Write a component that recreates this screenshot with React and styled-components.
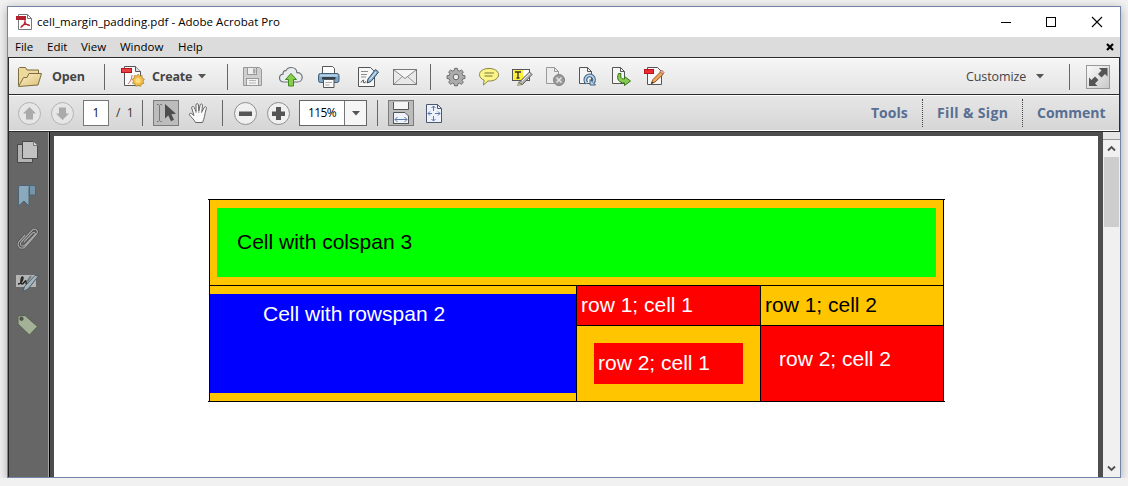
import React from 'react';
import styled, { createGlobalStyle } from 'styled-components'

const Open = () => (
    <Icon width="26" height="24">
        <defs>
            <linearGradient id="folder" x1="0" y1="0" x2="1" y2="1">
                <stop offset="0" stopColor="#fbf0c4" />
                <stop offset="1" stopColor="#dcbf78" />
            </linearGradient>
        </defs>
        <path d="M1.500 20.500V3.500L2.500 2.500h6l1.500 2.500H21.500V9" fill="#ecd99c" stroke="#7d6c3e" />
        <path d="M1.500 21.500L6.500 12.500h3.500l2-4h12.500L21 20z" fill="url(#folder)" stroke="#7d6c3e" strokeLinejoin="round" />
    </Icon>
)

const CreatePdf = () => (
    <Icon width="24" height="24">
        <path d="M3.500 1.500h11l5 5v14h-16z" fill="#fafafa" stroke="#555" />
        <path d="M14.500 1.500v5h5" fill="#ddd" stroke="#555" />
        <rect x="0.500" y="3.500" width="10" height="4" fill="#ea3d44" stroke="#b3151c" />
        <path d="M7 19c2-2 4-5 4-9" fill="none" stroke="#c9656a" />
        <path d="M16.500 11.500l1.800 2.200 2.800-.6.100 2.900 2.500 1.300-1.600 2.300 1.100 2.500-2.800.6-.8 2.700-2.900-1-2.700 1-.9-2.700-2.800-.6 1-2.500-1.500-2.300 2.400-1.300.1-2.900 2.800.6z" transform="translate(2.500 -1) scale(.88)" fill="#f2be48" stroke="#a87a25" strokeWidth=".8" />
        <circle cx="17" cy="15.500" r="2.600" fill="#fbdc82" />
    </Icon>
)

const Save = () => (
    <Icon width="22" height="22">
        <path d="M1.500 1.500h16l2 2v16h-18z" fill="#cfcfcf" stroke="#989898" />
        <rect x="5.500" y="1.500" width="9" height="7" fill="#eee" stroke="#989898" />
        <rect x="11" y="2.500" width="2.500" height="5" fill="#aaa" />
        <rect x="4.500" y="12.500" width="12" height="7" fill="#f2f2f2" stroke="#989898" />
        <path d="M7 14.500h7M7 17h7" stroke="#b5b5b5" />
    </Icon>
)

const Cloud = () => (
    <Icon width="26" height="22">
        <path d="M6 16C2.500 16 1.500 13.500 1.500 12c0-2 1.500-3.500 3.500-3.800C4.800 5.500 6.500 4.300 8 4.600 9 2.500 11 1.500 13.200 1.500c3.300 0 5.600 2.200 5.700 5.200 3.200-.2 5.300 1.800 5.300 4.500 0 2.900-2 4.800-4.500 4.800z" fill="#e9edef" stroke="#6b7276" strokeWidth="1.200" />
        <path d="M13 7.500l5.500 6h-3v6.500h-5v-6.500h-3z" fill="#86cc4d" stroke="#3f8a1d" />
    </Icon>
)

const Print = () => (
    <Icon width="24" height="24">
        <path d="M5.500 9V1.500h10l2 2V9" fill="#fff" stroke="#555" />
        <rect x="1.500" y="8.500" width="20.500" height="9" rx="2" fill="#7fa5c4" stroke="#41607a" />
        <path d="M3 10.500h17.500" stroke="#b9d4e8" strokeWidth="2" />
        <rect x="5" y="12" width="13.500" height="2.500" fill="#33404c" />
        <path d="M6.500 14.500h10.500v8H6.500z" fill="#fafafa" stroke="#555" />
        <path d="M8.500 17.500h6.500M8.500 20h4" stroke="#aaa" />
    </Icon>
)

const SignDoc = () => (
    <Icon width="24" height="22">
        <path d="M1.500 1.500h12l4 4v15h-16z" fill="#f8f8f8" stroke="#555" />
        <path d="M4 5.500h7M4 8.500h6M4 11h5" stroke="#8a8a8a" />
        <path d="M4 16.500c2-3 3-3 2.500-1s1 1.500 2.500 0" fill="none" stroke="#333" />
        <path d="M10 17l1-4L18.500 3.500 21.500 6 14 15.500z" fill="#8bb4d6" stroke="#33495c" />
        <path d="M13 13.500l6-7.500" stroke="#e3f0fa" />
    </Icon>
)

const Mail = () => (
    <Icon width="26" height="18">
        <rect x="1.500" y="1.500" width="23" height="15" fill="#e9e9e9" stroke="#777" />
        <path d="M2 16l8.500-7.500M24 16l-8.500-7.500" stroke="#999" />
        <path d="M2 2l11 8.500L24 2" fill="#f5f5f5" stroke="#888" />
    </Icon>
)

const Gear = () => (
    <Icon width="20" height="20">
        <g fill="#acacac" stroke="#666">
            <path d="M8.500 1.500h3l.5 2.300 1.700.7 2-1.300 2.100 2.100-1.300 2 .7 1.700 2.300.5v3l-2.300.5-.7 1.700 1.300 2-2.100 2.100-2-1.300-1.700.7-.5 2.300h-3L8 18.200l-1.700-.7-2 1.300-2.100-2.100 1.300-2-.7-1.700L.500 12.500v-3L2.800 9l.7-1.700-1.300-2 2.100-2.100 2 1.300L8 3.800z" transform="translate(0.600 0) scale(.94 .92)" />
            <circle cx="10" cy="10" r="2.800" fill="#eaeaea" />
        </g>
    </Icon>
)

const Bubble = () => (
    <Icon width="22" height="20">
        <path d="M11 1.500c5.500 0 9.500 2.500 9.500 6.200s-4 6.300-9 6.300c-.6 0-1 0-1.500-.1L5.500 18l.6-4.900C3.200 12 1.500 10 1.500 7.700c0-3.700 4-6.200 9.500-6.200z" fill="#fbf588" stroke="#8a8546" />
        <path d="M6.500 6h9.500M6.500 9h8" stroke="#77733a" />
    </Icon>
)

const Highlight = () => (
    <Icon width="24" height="20">
        <rect x="1.500" y="2.500" width="17" height="11" fill="#fff" stroke="#555" />
        <rect x="2" y="3" width="10" height="10" fill="#fdf03c" />
        <path d="M4 5h6M7 4.500v6.500M5.500 11h3" stroke="#333" strokeWidth="1.300" />
        <path d="M7.500 16L18.500 5 21 7.500 11.500 17.500z" fill="#b5b5b5" stroke="#555" />
        <path d="M6.500 18.500l1-3 3.500 2.200z" fill="#d8d068" stroke="#777" strokeWidth=".6" />
        <path d="M11 14l8-8" stroke="#eee" />
    </Icon>
)

const page = "M1.500 1.500h8l4 4v12h-12z"

const DeletePage = () => (
    <Icon width="22" height="21">
        <path d={page} fill="#ececec" stroke="#999" />
        <path d="M9.500 1.500v4h4" fill="none" stroke="#999" />
        <circle cx="14" cy="14" r="5.500" fill="#999" stroke="#808080" />
        <path d="M11.500 11.500l5 5M16.500 11.500l-5 5" stroke="#e5e5e5" strokeWidth="1.500" />
    </Icon>
)

const RotatePage = () => (
    <Icon width="22" height="21">
        <path d={page} fill="#f5f5f5" stroke="#555" />
        <path d="M9.500 1.500v4h4" fill="none" stroke="#555" />
        <path d="M8.800 17a4.300 4.300 0 1 1 6.200-.500" fill="none" stroke="#3f6080" strokeWidth="3.800" />
        <path d="M12 13.500v5.500h5.500z" fill="#b9d3e8" stroke="#3f6080" />
        <path d="M8.800 17a4.300 4.300 0 1 1 6.200-.500" fill="none" stroke="#b9d3e8" strokeWidth="1.800" />
    </Icon>
)

const ExportPage = () => (
    <Icon width="22" height="21">
        <path d={page} fill="#f5f5f5" stroke="#555" />
        <path d="M9.500 1.500v4h4" fill="none" stroke="#555" />
        <path d="M7.500 7.500c-2.500 5.500.500 9.500 6 9.500v2.500l6-4.500-6-4.500v2.500c-3 0-4.500-1.500-3.500-5.500z" fill="#86ca50" stroke="#39731c" />
    </Icon>
)

const EditPdf = () => (
    <Icon width="23" height="21">
        <path d="M4.500 1.500h10l4 4v13h-14z" fill="#f7f7f7" stroke="#555" />
        <rect x="1.500" y="3.500" width="9" height="4" fill="#ea2b31" stroke="#b8161c" />
        <path d="M8.500 17.500l1.500-4 8-8 2.500 2.500-8.500 8z" fill="#efa55a" stroke="#8c5520" />
        <path d="M17 5.500l1.500-1.500 2.500 2.500-1.500 1.500z" fill="#f0b6a8" stroke="#95523f" strokeWidth=".8" />
        <path d="M8 17.800l.8-2.300 1.600 1.500z" fill="#222" />
    </Icon>
)

const Hand = () => (
    <Icon width="22" height="22">
        <path d="M7.500 20.500c-1-2.500-4-5-6-7.500-.7-1.300.8-2.300 2.300-1.200L6 13.500 3.700 6c-.3-1.700 1.800-2.200 2.400-.7L8 9.500 8 2.800c.2-1.600 2.200-1.600 2.400 0l.4 6.200 1.400-6.200c.5-1.400 2.400-1 2.300.5L13.800 9.800l2.600-4.500c.8-1.200 2.400-.4 2 1-.8 3-1.400 5-1.900 8-.3 2.300-1.200 4-2 6.200z" fill="#fafafa" stroke="#666" />
        <path d="M8 9v2M10.800 9v2M13.700 9.500l-.3 1.500" stroke="#999" />
    </Icon>
)

const Cursor = () => (
    <Icon width="24" height="24">
        <path d="M3 3.500h1.500l1 1 1-1H8M5.500 4.500v15M3 20.500h1.500l1-1 1 1H8" fill="none" stroke="#777" />
        <path d="M11 3v14.500l3.300-3 2.700 5.700 3-1.400-2.600-5.500 4.600-.5z" fill="#4d4d4d" />
    </Icon>
)

const FitWidth = () => (
    <Icon width="24" height="24">
        <path d="M4.500 1v7.500h15V1" fill="#f5f5f5" stroke="#555" />
        <path d="M4.500 23V11.500h11.500l3.500 3.500v8" fill="#eef2fb" stroke="#555" />
        <path d="M4.500 22.500h15" stroke="#555" />
        <path d="M6 18.500h12M8.500 16l-2.500 2.500 2.500 2.500M15.500 16l2.500 2.500-2.500 2.500" fill="none" stroke="#5b77a8" />
    </Icon>
)

const FitPage = () => (
    <Icon width="18" height="21">
        <path d="M1.500 1.500h11l4 4v14h-15z" fill="#eef2fb" stroke="#4c5872" />
        <path d="M12.500 1.500v4h4" fill="none" stroke="#4c5872" />
        <path d="M8.500 3v5M8.500 13v5M3 10.500h4M10 10.500h5M6.500 5l2-2 2 2M6.500 16l2 2 2-2M5 8.500l-2 2 2 2M13 8.500l2 2-2 2" fill="none" stroke="#5b77a8" />
    </Icon>
)

const Pages = () => (
    <Icon width="24" height="24">
        <path d="M1.500 4.500h15v18h-15z" fill="#b3b3b3" stroke="#484848" />
        <path d="M6.500 1.500h11l4 4v13h-15z" fill="#c2c2c2" stroke="#484848" />
        <path d="M17.500 1.500v4h4" fill="#ddd" stroke="#777" />
    </Icon>
)

const Bookmark = () => (
    <Icon width="24" height="24">
        <path d="M13.500 2.500h4.500q1.500 0 1.500 2v7.500h-6z" fill="#7595aa" stroke="#4d6373" />
        <path d="M2.500 23V4q0-1.500 2-1.500h10q-1.500.5-1.500 2v18.500l-5-5z" fill="#8ba9bc" stroke="#4d6373" />
    </Icon>
)

const clip = "M8 16L16.500 7c2-1.500 3.500.3 2.200 2L9 19c-3 2.600-6 0-3.800-3L16 4.500c3.200-3 7 .2 4.500 3.500L9.500 20.500c-3.500 3.800-9.500.3-6.500-5L9 9"

const Clip = () => (
    <Icon width="24" height="24">
        <path d={clip} fill="none" stroke="#444" strokeWidth="2.200" />
        <path d={clip} fill="none" stroke="#a8a8a8" strokeWidth="1.200" />
    </Icon>
)

const Signature = () => (
    <Icon width="24" height="24">
        <path d="M0 6h20v12H0z" fill="#b4b4b4" />
        <path d="M2 15c4 0 6-7 4.500-7S4 15 6 15s3-4 4-3-1 3 1 3" fill="none" stroke="#222" strokeWidth="1.400" />
        <path d="M7 22.500l1.500-5L19 6.500l3.500.500L12 20z" fill="#a2b4c0" stroke="#4e5a62" />
        <path d="M15 7L11 13" stroke="#6e7a82" strokeWidth="2" />
    </Icon>
)

const Tag = () => (
    <Icon width="24" height="24">
        <path d="M2 4l7-.500L21.500 14.500l-8 8.500L2 12z" fill="#a3b296" stroke="#55604c" />
        <circle cx="5.500" cy="6.800" r="1.800" fill="#555" stroke="#3f3f3f" strokeWidth=".6" />
    </Icon>
)

const RoundArrow = ({ down }) => (
    <Icon width="25" height="25">
        <circle cx="12.500" cy="12.500" r="11" fill="#e6e6e6" stroke="#b2b2b2" />
        <path d="M12.500 6l6.500 6.500h-3V18.500h-7v-6H6z" fill="#aaa" transform={down ? 'rotate(180 12.5 12.5)' : undefined} />
    </Icon>
)

const RoundSign = ({ plus }) => (
    <Icon width="25" height="25">
        <circle cx="12.500" cy="12.500" r="11" fill="#f0f0f0" stroke="#8e8e8e" />
        <path d="M6 10.500h13v4.500H6z" fill="#555" />
        { plus && <path d="M10 6h5v13h-5z" fill="#555" /> }
    </Icon>
)

const Caret = () => (
    <Icon width="8" height="5"><path d="M0 0h8L4 4.500z" fill="#555" /></Icon>
)

const files = [
    { icon: Save, left: 14 },
    { icon: Cloud, left: 14 },
    { icon: Print, left: 13 },
    { icon: SignDoc, left: 16 },
    { icon: Mail, left: 11 },
]

const tools = [
    { icon: Gear, left: 15 },
    { icon: Bubble, left: 12 },
    { icon: Highlight, left: 11 },
    { icon: DeletePage, left: 10 },
    { icon: RotatePage, left: 11 },
    { icon: ExportPage, left: 11 },
    { icon: EditPdf, left: 10 },
]

const panels = [Pages, Bookmark, Clip, Signature, Tag]

function App () {

    return (
        <Window>
            <GlobalStyle />

{/* title bar */}
            <TitleBar>
                <Icon width="18" height="18">
                    <path d="M3.500 1.500h9l4 4v11h-13z" fill="#fff" stroke="#777" />
                    <path d="M12.500 1.500v4h4" fill="none" stroke="#777" />
                    <path d="M1 3h10v4H1z" fill="#b3202c" />
                    <path d="M5.500 14.500c3-1.500 5-5 4.500-7.500M9.800 8c.5 3 2.500 4.500 5.200 4.500M6.500 13c2-1.500 5-2 8-1" fill="none" stroke="#b3202c" strokeWidth="1.200" />
                </Icon>
                <Title>cell_margin_padding.pdf - Adobe Acrobat Pro</Title>
                <Icon width="104" height="12">
                    <path d="M1 6.500h10" stroke="#000" />
                    <rect x="46.500" y="1.500" width="9" height="9" fill="none" stroke="#000" />
                    <path d="M92 1l10 10M102 1L92 11" stroke="#000" strokeWidth="1.100" />
                </Icon>
            </TitleBar>

{/* menu */}
            <MenuBar>
                <MenuItem $width={32}>File</MenuItem>
                <MenuItem $width={34}>Edit</MenuItem>
                <MenuItem $width={39}>View</MenuItem>
                <MenuItem $width={58}>Window</MenuItem>
                <MenuItem $width={30}>Help</MenuItem>
                <CloseIcon width="8" height="8"><path d="M1 1l6 6M7 1L1 7" stroke="#000" strokeWidth="2.200" /></CloseIcon>
            </MenuBar>

{/* toolbars */}
            <Frame>
                <Toolbar>
                    <Group $left={8}><Open /></Group>
                    <Label $left={9} $width={34}>Open</Label>
                    <Separator $left={18} />
                    <Group $left={16}><CreatePdf /></Group>
                    <Label $left={7} $width={46}>Create</Label>
                    <Caret />
                    <Separator $left={21} />
                    { files.map((item, i)=> (
                        <Group $left={item.left} key={i}><item.icon /></Group>
                    )) }
                    <Separator $left={12} />
                    { tools.map((item, i)=> (
                        <Group $left={item.left} key={i}><item.icon /></Group>
                    )) }
                    <Spacer />
                    <Customize>Customize</Customize>
                    <Caret />
                    <Separator $left={25} />
                    <Expand>
                        <Icon width="22" height="22">
                            <path d="M12 2h8.500v8.500L18 8l-3.500 3.500-3.500-3.500L14.500 4.500zM10.500 20H2v-8.500L4.500 14 8 10.500l3.500 3.500L8 17.500z" fill="#555" />
                        </Icon>
                    </Expand>
                </Toolbar>

                <Toolbar $second>
                    <Group $left={8}><RoundArrow /></Group>
                    <Group $left={8}><RoundArrow down /></Group>
                    <PageInput>1</PageInput>
                    <PageCount>/&nbsp; 1</PageCount>
                    <Separator $left={5} />
                    <ToolButton $left={10}><Cursor /></ToolButton>
                    <Group $left={9}><Hand /></Group>
                    <Separator $left={12} />
                    <Group $left={10}><RoundSign /></Group>
                    <Group $left={8}><RoundSign plus /></Group>
                    <Zoom>
                        <ZoomValue>115%</ZoomValue>
                        <ZoomArrow><Caret /></ZoomArrow>
                    </Zoom>
                    <Separator $left={10} />
                    <ToolButton $left={10}><FitWidth /></ToolButton>
                    <Group $left={11}><FitPage /></Group>
                    <Spacer />
                    <Pane $width={52} $line>Tools</Pane>
                    <Pane $width={86} $left={14} $spacing={0.35} $line>Fill &amp; Sign</Pane>
                    <Pane $width={82} $left={14}>Comment</Pane>
                </Toolbar>
            </Frame>

{/* document */}
            <Main>
                <Sidebar>
                    { panels.map((Panel, i)=> <Panel key={i} />) }
                </Sidebar>
                <Viewer>
                    <Page>
                        <Table>
                            <Wide>
                                <Block $bg="#0f0" $color="#000" $left={20} $bottom={2}>Cell with colspan 3</Block>
                            </Wide>
                            <Tall>
                                <Block $bg="#00f" $left={53} $top={8}>Cell with rowspan 2</Block>
                            </Tall>
                            <Cell $bg="#f00">row 1; cell 1</Cell>
                            <Cell $color="#000">row 1; cell 2</Cell>
                            <Inset>
                                <Block $bg="#f00" $left={4} $bottom={2}>row 2; cell 1</Block>
                            </Inset>
                            <Cell $bg="#f00" $left={18} $bottom={10}>row 2; cell 2</Cell>
                        </Table>
                    </Page>
                </Viewer>
                <Scrollbar>
                    <Splitter />
                    <Arrow><Icon width="9" height="7"><path d="M1 5.500l3.500-3.500L8 5.500" fill="none" stroke="#505050" strokeWidth="1.900" /></Icon></Arrow>
                    <Thumb />
                    <Spacer />
                    <Arrow><Icon width="9" height="7"><path d="M1 1.500L4.500 5 8 1.500" fill="none" stroke="#505050" strokeWidth="1.900" /></Icon></Arrow>
                </Scrollbar>
            </Main>
        </Window>
    )
}

const GlobalStyle = createGlobalStyle`
    * {
        box-sizing: border-box;
    }

    body {
        margin: 0;
        background-color: #f1f1f1;
        overflow: hidden;
    }
`

const Window = styled.div`
    display: flex;
    flex-direction: column;
    width: 1114px;
    height: 472px;
    margin: 6px 0 0 7px;
    border: 1px solid #7484a6;
    background-color: white;
    box-shadow: 0 2px 9px rgba(0, 0, 0, 0.3);
    font-family: 'Open Sans', 'Noto Sans', sans-serif;
`

const Icon = styled.svg`
    display: block;
    flex: none;
`

const TitleBar = styled.div`
    display: flex;
    align-items: center;
    height: 30px;
    padding: 0 16px 0 7px;
`

const Title = styled.div`
    flex: 1;
    margin-left: 4px;
    padding-bottom: 2px;
    font-size: 11.5px;
    letter-spacing: 0.04px;
    color: black;
    white-space: nowrap;
`

const MenuBar = styled.div`
    display: flex;
    align-items: center;
    height: 20px;
    padding: 0 6px 0 7px;
    background-color: #dcdcdc;
`

const MenuItem = styled.div`
    width: ${p => p.$width}px;
    padding-bottom: 2px;
    font-size: 11.5px;
    color: black;
`

const CloseIcon = styled(Icon)`
    margin-left: auto;
`

const Frame = styled.div`
    border: 1px solid #2b2b2b;
`

const Toolbar = styled.div`
    display: flex;
    align-items: center;
    height: ${p => p.$second ? 36 : 37}px;
    border-top: 1px solid white;
    border-bottom: 1px solid ${p => p.$second ? 'white' : '#2b2b2b'};
    background: ${p => p.$second ? 'linear-gradient(#e6e6e6, #d6d6d6)' : 'linear-gradient(#f5f5f5, #e4e4e4)'};
`

const Group = styled.div`
    flex: none;
    margin-left: ${p => p.$left}px;
`

const Label = styled.div`
    width: ${p => p.$width}px;
    margin-left: ${p => p.$left}px;
    font-size: 12.5px;
    font-weight: bold;
    letter-spacing: -0.2px;
    color: #444;
`

const Separator = styled.div`
    width: 1px;
    height: 26px;
    margin-left: ${p => p.$left}px;
    background-color: #666;
`

const Spacer = styled.div`
    flex: 1;
`

const Customize = styled.div`
    width: 70px;
    font-size: 12.5px;
    letter-spacing: -0.1px;
    color: #444;
`

const Expand = styled.div`
    width: 24px;
    height: 24px;
    margin: 0 9px 0 16px;
    border: 1px solid #999;
    background: linear-gradient(135deg, #fafafa, #c9c9c9);
`

const PageInput = styled.div`
    width: 26px;
    height: 26px;
    margin-left: 8px;
    border: 1px solid #777;
    background-color: white;
    font-size: 12px;
    line-height: 23px;
    text-align: center;
    color: #111;
`

const PageCount = styled.div`
    width: 21px;
    margin-left: 7px;
    padding-bottom: 1px;
    font-size: 12px;
    white-space: nowrap;
    color: #333;
`

const ToolButton = styled.div`
    width: 26px;
    height: 26px;
    margin-left: ${p => p.$left}px;
    border: 1px solid #7b7b7b;
    background-color: #bcbcbc;
`

const Zoom = styled.div`
    display: flex;
    width: 68px;
    height: 26px;
    margin-left: 8px;
    border: 1px solid #666;
    background-color: white;
`

const ZoomValue = styled.div`
    width: 45px;
    padding-left: 8px;
    border-right: 1px solid #777;
    font-size: 12px;
    letter-spacing: -0.6px;
    line-height: 23px;
    color: black;
`

const ZoomArrow = styled.div`
    display: flex;
    flex: 1;
    align-items: center;
    justify-content: center;
    background-color: #f6f6f6;
`

const Pane = styled.div`
    width: ${p => p.$width}px;
    height: 28px;
    margin-left: ${p => p.$left || 0}px;
    border-right: ${p => p.$line ? '1px dotted #444' : 'none'};
    font-size: 14px;
    font-weight: bold;
    line-height: 27px;
    letter-spacing: ${p => p.$spacing || 0}px;
    white-space: nowrap;
    color: #586f93;
`

const Main = styled.div`
    display: flex;
    flex: 1;
    min-height: 0;
    background-color: #4d4d4d;
`

const Sidebar = styled.div`
    display: flex;
    flex-direction: column;
    gap: 19px;
    width: 42px;
    padding: 8px 0 0 7px;
    border-left: 1px solid #222;
    border-right: 1px solid black;
    background-color: #666;
    box-shadow: inset -1px 0 #a5a5a5;
`

const Viewer = styled.div`
    flex: 1;
    padding: 4px 5px 0 4px;
`

const Page = styled.div`
    height: 100%;
    padding: 63px 0 0 155px;
    background-color: white;
`

/* the 1px gaps show the black behind as cell borders */
const Table = styled.div`
    position: relative;
    display: grid;
    grid-template-columns: 366px 183px 182px;
    grid-template-rows: 85px 39px 75px;
    gap: 1px;
    width: 735px;
    padding: 1px;
    background-color: black;
    font-family: 'Liberation Sans', Arial, sans-serif;
    font-size: 21px;

    &::before {
        content: '';
        position: absolute;
        inset: 0 -1px;
        border: solid black;
        border-width: 1px 0;
    }
`

const Cell = styled.div`
    display: flex;
    align-items: center;
    padding: 0 0 ${p => p.$bottom || 2}px ${p => p.$left || 4}px;
    background-color: ${p => p.$bg || '#ffc600'};
    color: ${p => p.$color || 'white'};
`

const Wide = styled.div`
    grid-column: 1 / 4;
    padding: 8px 7px;
    background-color: #ffc600;
`

const Tall = styled.div`
    grid-row: 2 / 4;
    padding: 8px 0;
    background-color: #ffc600;
`

const Inset = styled.div`
    padding: 17px;
    background-color: #ffc600;
`

const Block = styled.div`
    display: flex;
    align-items: ${p => p.$top ? 'flex-start' : 'center'};
    height: 100%;
    padding: ${p => p.$top || 0}px 0 ${p => p.$bottom || 0}px ${p => p.$left}px;
    background-color: ${p => p.$bg};
    color: ${p => p.$color || 'white'};
`

const Scrollbar = styled.div`
    display: flex;
    flex-direction: column;
    width: 17px;
    background-color: #f0f0f0;
`

const Splitter = styled.div`
    height: 8px;
    border-bottom: 1px solid #999;
    background-color: #e6e6e6;
`

const Arrow = styled.div`
    display: flex;
    align-items: center;
    justify-content: center;
    height: 17px;
`

const Thumb = styled.div`
    height: 70px;
    margin: 0 1px;
    background-color: #cdcdcd;
`

export default App
